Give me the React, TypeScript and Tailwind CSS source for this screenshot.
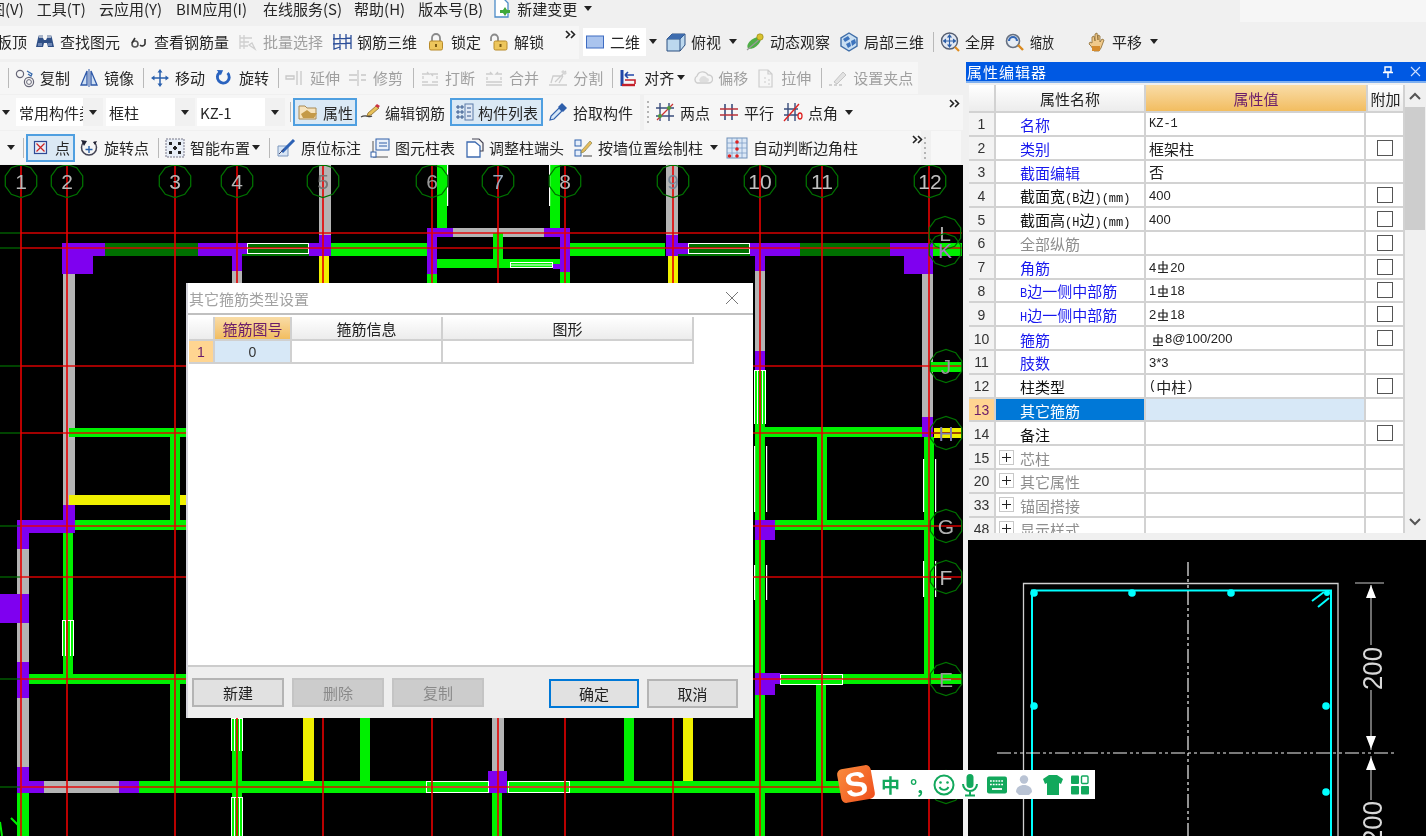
import React from "react";

const S = ({ children, w = 20, h = 20, vb = "0 0 20 20" }: { children: React.ReactNode; w?: number; h?: number; vb?: string }) => (
  <svg width={w} height={h} viewBox={vb} fill="none" className="shrink-0">{children}</svg>
);

const I = {
  binoculars: <S><path d="M3 6l1-3h4v3l1 2h2l1-2V3h4l1 3 2 9h-6l-1-4H9l-1 4H1z" fill="#2f4f86" /><path d="M4 3h4v3H4zM12 3h4v3h-4z" fill="#a8b4c8" /><path d="M3 11h4v3H3zM13 11h4v3h-4z" fill="#6d86b4" /></S>,
  glasses: <S><circle cx="6" cy="12" r="3" stroke="#555" strokeWidth="1.6" /><path d="M3 11l3-5M16 7v5a3 3 0 0 1-5 1" stroke="#333" strokeWidth="1.6" /></S>,
  batch: <S><path d="M2 3v14M6 3v14M2 6h12M2 10h9M2 14h8M11 13l6 4-3-6z" stroke="#cfcfcf" strokeWidth="1.3" /></S>,
  rebar3d: <S><path d="M2 2v15l6-2M8 2v16M14 2v15M19 3v14M1 7l18-1M1 12l18-1" stroke="#2d4f9a" strokeWidth="1.3" /></S>,
  lock: <S><path d="M6 9V6a4 4 0 0 1 8 0v3" stroke="#8a8a8a" strokeWidth="1.8" /><rect x="3.5" y="9" width="13" height="9" rx="1.5" fill="#edc65c" stroke="#b88a28" /><rect x="9" y="12" width="2" height="3" fill="#7b5a12" /></S>,
  unlock: <S><path d="M2 9V6a3.5 3.5 0 0 1 7 0v3" stroke="#8a8a8a" strokeWidth="1.8" /><rect x="5" y="9" width="13" height="9" rx="1.5" fill="#edc65c" stroke="#b88a28" /><rect x="10.5" y="12" width="2" height="3" fill="#7b5a12" /></S>,
  flat: <S w={20}><rect x="1.5" y="4" width="17" height="12" fill="#aac4ee" stroke="#3e6cc2" /></S>,
  cube: <S><path d="M1 7l5-5h13v11l-5 6H1z" fill="#bcd8ee" stroke="#2b4f80" /><path d="M1 7h13v12M14 7l5-5" stroke="#2b4f80" /><path d="M1 7l5-5h13l-5 5z" fill="#3e6cae" /></S>,
  orbit: <S><ellipse cx="9" cy="11" rx="8" ry="4" transform="rotate(-38 9 11)" fill="#4fae48" /><path d="M2 18L17 5" stroke="#999" strokeWidth="1.2" /><circle cx="15" cy="5" r="3.2" fill="#d9c22e" stroke="#8a7a10" strokeWidth=".6" /></S>,
  local3d: <S><path d="M10 1l8 5v8l-8 5-8-5V6z" fill="#c9dff2" stroke="#3f6ea8" strokeWidth="1.4" /><path d="M4 7l5-3 2 3-5 3zM12 9l4-2 1 4-4 3zM7 12l4-2 1 4-3 2z" fill="#3d74bd" /></S>,
  full: <S><circle cx="9.5" cy="9" r="8" fill="#e2e8f2" stroke="#555e70" strokeWidth="1.4" /><path d="M9.5 3.5v11M4 9h11M9.5 3L8 5h3zM9.5 15L8 13h3zM3.5 9l2-1.5v3zM15.5 9l-2-1.5v3z" stroke="#2d5fa8" strokeWidth="1.1" /><path d="M15 15l4 4" stroke="#e08c1e" strokeWidth="2.2" /></S>,
  zoom: <S><circle cx="8" cy="9" r="6.5" fill="#e6ecf4" stroke="#667080" strokeWidth="1.6" /><path d="M4 9a4 4 0 0 1 8 0" stroke="#3468b6" strokeWidth="2.2" /><path d="M13 13l5 5" stroke="#d9891e" strokeWidth="2.4" /></S>,
  pan: <S><path d="M5 11V5l2-1 1 5V2l2-1 1 7V3l2 1v6l2-3 2 1-3 8-2 3H7l-3-5-2-2 1-2z" fill="#f0c98a" stroke="#8a6a30" strokeWidth=".8" /><path d="M5 14h8v5H5z" fill="#d58b2c" /></S>,
  copy: <S><circle cx="5" cy="6" r="3.6" stroke="#667" strokeWidth="1.2" /><circle cx="14" cy="14" r="4.6" stroke="#667" strokeWidth="1.2" /><circle cx="14" cy="14" r="2.4" stroke="#667" strokeWidth="1" /><path d="M12 3l5 3-1 2-3-2" stroke="#36a" strokeWidth="1.2" /></S>,
  mirror: <S><path d="M8 3L2 17h6zM12 3l6 14h-6z" fill="#cfe0f4" stroke="#2e58a8" strokeWidth="1.3" /><path d="M10 1v18" stroke="#2e58a8" /></S>,
  move: <S><path d="M10 3v14M3 10h14" stroke="#2a60ad" strokeWidth="1.5" /><path d="M10 1L7.5 4.5h5zM10 19l-2.5-3.5h5zM1 10l3.5-2.5v5zM19 10l-3.5-2.5v5z" fill="#2a60ad" /></S>,
  rotate: <S w={18} h={18}><path d="M14 4.5A6.6 6.6 0 1 1 5 4" stroke="#2a63bf" strokeWidth="3.2" /><path d="M2 1l7 .5-2.5 5.5z" fill="#2a63bf" /></S>,
  extend: <S><path d="M1 8h8v3H1zM12 3v14M16 3v14" stroke="#c8c8c8" strokeWidth="1.3" /></S>,
  trim: <S><path d="M1 7h8M1 12h8M10 2v16M13 7h5M13 12h5" stroke="#c8c8c8" strokeWidth="1.3" /></S>,
  breakI: <S><path d="M2 14h6M12 14h6M2 17h16M3 11V8M17 11V8M2 6h7l-2-2M18 6h-7l2 2" stroke="#cdcdcd" strokeWidth="1.3" /></S>,
  merge: <S><path d="M2 14h16M2 17h16M3 12V9M17 12V9M2 6h6l-2-2M18 6h-6l2-2" stroke="#cdcdcd" strokeWidth="1.3" /></S>,
  split: <S><path d="M1 17h18M3 15l2-7h10M15 8l-4 7M7 14L18 3" stroke="#cdcdcd" strokeWidth="1.3" /><path d="M15 2l4 3-2 2-4-3z" fill="#d6d6d6" /></S>,
  align: <S><path d="M3 2v16" stroke="#2246a8" strokeWidth="3" /><path d="M3 17h13" stroke="#c41f2a" strokeWidth="2.4" /><path d="M6 12h10v4" stroke="#c41f2a" strokeWidth="1.6" /><path d="M6 7h9M6 7l3-3M6 7l3 3" stroke="#2246a8" strokeWidth="1.6" /></S>,
  offset: <S><path d="M4 15a4 4 0 0 1 0-7 6 6 0 0 1 11-1 4 4 0 0 1 1 8z" stroke="#cdcdcd" strokeWidth="1.4" /><path d="M7 14a3 3 0 0 1 0-4 4 4 0 0 1 7 0 2 2 0 0 1 0 4z" fill="#dedede" /></S>,
  stretch: <S><path d="M3 2h9l4 4v13H3zM12 2v4h4" stroke="#cdcdcd" strokeWidth="1.2" /><path d="M9 9v8M13 11v6" stroke="#ccc" strokeDasharray="2 2" /></S>,
  grip: <S><path d="M1 17h3M6 17h3M11 17h3" stroke="#c5c5c5" strokeWidth="1.4" /><path d="M6 14l9-10 3 3-9 9z" fill="#e2e2e2" stroke="#c5c5c5" /></S>,
  prop: <S><path d="M1 4h6l2 2h9v11H1z" fill="#f6e3bd" stroke="#a88a55" /><path d="M3 12l6-4 4 3h6l-3 5H5z" fill="#c49a48" /></S>,
  edit: <S><path d="M1 15c5-3 8 1 11-1" stroke="#444" strokeWidth="1.3" /><path d="M8 11l8-7 3 2-8 7-4 1z" fill="#e8c15a" stroke="#8a6a2a" strokeWidth=".8" /><path d="M15 4l2-2 3 2-2 2z" fill="#c34" /></S>,
  list: <S><rect x="10" y="2" width="8" height="16" fill="#dfe8f5" stroke="#5a7aa8" /><path d="M2 4h2v2H2zM6 4h2v2H6zM2 9h2v2H2zM6 9h2v2H6zM2 14h2v2H2zM6 14h2v2H6zM12 6h4M12 10h4M12 14h4" stroke="#35578c" strokeWidth="1" /></S>,
  dropper: <S><path d="M2 18l1-4 8-8 3 3-8 8z" fill="#d4e6f8" stroke="#3162ad" strokeWidth="1.2" /><path d="M10 5l4-4 5 5-4 4z" fill="#2e5fab" /></S>,
  twoPt: <S><path d="M5 1v18M14 1v18M1 6h18M1 14h18" stroke="#3a4d7c" strokeWidth="1.4" /><path d="M2 18L18 2" stroke="#c33" strokeWidth="1.2" /><circle cx="5" cy="14" r="2" fill="#4c9a3a" /><circle cx="14" cy="6" r="2" fill="#4c9a3a" /></S>,
  parallel: <S><path d="M6 2v16M13 2v16" stroke="#3a4d7c" strokeWidth="1.6" /><path d="M1 7h18M1 13h18" stroke="#b9323a" strokeWidth="1.6" /></S>,
  angle: <S><path d="M5 1v18M12 1v18M1 7h14M1 13h14" stroke="#3a4d7c" strokeWidth="1.4" /><path d="M1 19L16 2" stroke="#d22" strokeWidth="1.4" /><ellipse cx="17" cy="14" rx="2" ry="3" stroke="#d22" strokeWidth="1.3" /></S>,
  point: <S w={16} h={16} vb="0 0 16 16"><rect x="1.5" y="1.5" width="12" height="12" fill="#e6edf8" stroke="#2e4a96" strokeWidth="1.2" /><path d="M3.5 3.5l8 8M11.5 3.5l-8 8" stroke="#c22" strokeWidth="1.2" /></S>,
  rotPt: <S><path d="M5 4a7.5 7.5 0 1 0 10 0" stroke="#445" strokeWidth="1.5" /><path d="M10 8v7M6.5 11.5h7" stroke="#2a5fa8" strokeWidth="1.4" /><path d="M2 2l6 1-3 5zM18 3l-4 1 2 3z" fill="#223" /></S>,
  smart: <S><rect x="1" y="1" width="18" height="18" fill="#e8eef6" stroke="#778" strokeDasharray="2 1" /><path d="M4 4h3v3H4zM13 4h3v3h-3zM4 13h3v3H4zM13 13h3v3h-3z" fill="#222" /><path d="M9 8h2v4H9zM8 9h4v2H8z" fill="#222" /></S>,
  mark: <S><path d="M2 8h10v10H2z" fill="#d9e6f5" stroke="#7d97bd" /><path d="M6 14L18 2" stroke="#2d62b5" strokeWidth="3" /><path d="M3 16l5-5" stroke="#446" /></S>,
  table: <S><rect x="6" y="1" width="13" height="11" fill="#eaf1fa" stroke="#2f5fa8" /><path d="M9 5h8M9 8h8" stroke="#2f5fa8" /><path d="M3 3v16h15" stroke="#555" /><rect x="1" y="14" width="5" height="5" fill="#fff" stroke="#2f5fa8" /></S>,
  colEnd: <S><path d="M3 4h8l5 4v11H3z" fill="#fff" stroke="#3d6ab0" strokeWidth="1.3" /><path d="M8 1h7l4 4v8h-3" stroke="#445" strokeWidth="1.2" /></S>,
  wall: <S><rect x="2" y="2" width="6" height="6" fill="#e5eefa" stroke="#3162ad" /><rect x="2" y="12" width="6" height="6" fill="#e5eefa" stroke="#3162ad" /><path d="M10 18h9M10 12h3" stroke="#444" /><path d="M9 12L17 3l2 2-8 9-3 1z" fill="#e8bc5a" stroke="#885" strokeWidth=".7" /></S>,
  auto: <S w={22} h={22} vb="0 0 22 22"><rect x="1" y="1" width="20" height="20" fill="#dce8f6" stroke="#6f8fb8" /><path d="M6 1v20M11 1v20M16 1v20M1 6h20M1 11h20M1 16h20" stroke="#7fa0c8" strokeWidth=".8" /><circle cx="11" cy="5" r="1.8" fill="#d22" /><circle cx="3.5" cy="19" r="1.8" fill="#d22" /><circle cx="11" cy="19" r="1.8" fill="#d22" /><circle cx="11" cy="12" r="1.8" fill="#d22" /></S>,
  fileNew: <S><path d="M3 1h9l4 4v14H3z" fill="#fff" stroke="#4c8cc8" strokeWidth="1.3" /><path d="M13 9l2 3h3v3h-3l-2 3-2-3H8v-3h3z" fill="#3fa83a" /></S>,
};

function Caret({ className = "" }: { className?: string }) {
  return <svg width="8" height="5" viewBox="0 0 8 5" className={`shrink-0 ${className}`}><path d="M0 0h8L4 5z" fill="#222" /></svg>;
}
function Sep({ className = "" }: { className?: string }) {
  return <div className={`w-px h-5 bg-[#b9b9b9] shrink-0 ${className}`} />;
}
function More({ className = "" }: { className?: string }) {
  return <svg width="11" height="9" viewBox="0 0 11 9" className={`shrink-0 self-start mt-[4px] ${className}`}><path d="M1 1l3.5 3.5L1 8M6 1l3.5 3.5L6 8" stroke="#222" strokeWidth="1.6" fill="none" /></svg>;
}
function Dots({ className = "" }: { className?: string }) {
  return <div className={`flex flex-col gap-[3px] shrink-0 ${className}`}>{[0, 1, 2, 3, 4].map((i) => <div key={i} className="w-[2px] h-[2px] bg-[#b4b4b4]" />)}</div>;
}
function Tool({ icon, label, className = "", off = false }: { icon: React.ReactNode; label: string; className?: string; off?: boolean }) {
  return (
    <div className={`flex items-center gap-[5px] shrink-0 ${className}`}>
      <span className="w-5 h-5 flex items-center justify-center">{icon}</span>
      <span className={off ? "text-[#a0a0a0]" : "text-[#262626]"}>{label}</span>
    </div>
  );
}

function Combo({ label, className = "", wide }: { label: string; className?: string; wide: string }) {
  return (
    <div className={`flex h-[28px] shrink-0 ${className}`}>
      <div className={`bg-white overflow-hidden whitespace-nowrap flex items-center pl-[3px] ${wide}`}>{label}</div>
      <div className="w-[20px] bg-[#f1f1f1] flex items-center justify-center"><Caret /></div>
    </div>
  );
}

const G = "#00f000", P = "#7f00f0", Y = "#f0f000", W = "#b4b4b4", D = "#007000", RED = "#e60000";
type R = [number, number, number, number, string];
const walls: R[] = [
  [62, 243, 105, 256, P], [62, 243, 93, 274, P], [105, 243, 198, 256, D], [198, 243, 247, 256, P], [232, 256, 242, 271, P], [232, 271, 242, 283, W],
  [242, 254, 319, 256, D], [309, 243, 331, 256, P], [319, 235, 331, 243, P], [319, 165, 331, 235, W], [319, 256, 329, 283, Y], [331, 243, 427, 256, G],
  [437, 165, 447, 228, G], [550, 165, 560, 228, G], [453, 228, 544, 237, W], [493, 233, 503, 259, G], [437, 259, 560, 268, G], [427, 228, 453, 237, P], [427, 228, 437, 274, P],
  [544, 228, 570, 237, P], [560, 237, 570, 272, P], [553, 264, 560, 269, P], [427, 274, 437, 283, G], [560, 272, 570, 283, G], [570, 243, 665, 256, G],
  [666, 165, 678, 235, W], [666, 235, 678, 256, P], [678, 243, 688, 256, P], [668, 256, 678, 283, Y], [678, 254, 755, 256, D], [750, 243, 800, 256, P],
  [755, 256, 765, 271, P], [755, 271, 765, 351, W], [755, 370, 765, 427, G], [755, 351, 765, 370, P], [800, 243, 890, 256, D], [890, 243, 933, 256, P], [904, 243, 933, 274, P],
  [922, 274, 933, 417, W], [922, 417, 933, 437, P], [933, 243, 962, 256, G], [930, 362, 962, 372, G], [934, 428, 962, 438, Y], [934, 432, 962, 434, G],
  [755, 427, 922, 437, G], [817, 437, 827, 520, G], [765, 520, 924, 530, G], [924, 437, 934, 674, G], [755, 437, 765, 836, G], [755, 520, 775, 540, P],
  [843, 674, 962, 684, G], [816, 684, 826, 781, G], [755, 673, 780, 684, P], [755, 684, 775, 695, P], [139, 781, 900, 793, G],
  [63, 274, 75, 505, W], [63, 505, 75, 533, P], [17, 520, 75, 533, P], [17, 533, 29, 549, P], [17, 549, 29, 594, W], [0, 594, 29, 623, P], [17, 623, 29, 662, W], [17, 662, 29, 698, P],
  [17, 698, 29, 767, W], [17, 767, 29, 793, P], [29, 781, 44, 793, P], [44, 781, 119, 793, W], [119, 781, 139, 793, P], [17, 793, 29, 836, G],
  [69, 428, 186, 437, G], [69, 495, 186, 505, Y], [75, 520, 186, 530, G], [170, 437, 180, 520, G], [63, 533, 73, 674, G], [29, 674, 186, 684, G], [170, 684, 180, 781, G],
  [232, 751, 242, 781, G], [232, 793, 242, 797, G], [303, 718, 314, 781, Y], [360, 718, 370, 781, G], [492, 718, 504, 771, W], [488, 771, 507, 793, P], [492, 793, 502, 836, G], [624, 718, 634, 781, G], [683, 718, 693, 781, Y],
];
const boxesH: [number, number, number, number, string][] = [
  [247, 243, 309, 254, D], [688, 243, 750, 254, D], [510, 262, 553, 268, G], [780, 674, 843, 685, G], [426, 781, 489, 793, G], [508, 781, 570, 793, G],
];
const boxesV: [number, number, number, number][] = [[62, 620, 74, 656], [231, 718, 243, 751], [231, 797, 243, 836], [754, 370, 766, 424]];
const whiteV: [number, number, number][] = [[447, 165, 206], [549, 165, 206], [754, 446, 512], [766, 446, 512], [754, 565, 600], [766, 565, 600], [923, 459, 512], [935, 459, 512], [923, 561, 597], [935, 561, 597]];
const vx = [21, 67, 175, 237, 323, 432, 498, 565, 673, 760, 822, 929];
const hy = [233, 248, 366, 433, 526, 577, 679, 787];
const topLabels = ["1", "2", "3", "4", "5", "6", "7", "8", "9", "10", "11", "12"];
const topFill = ["#b8b8b8", "#b8b8b8", "#b8b8b8", "#b8b8b8", "#777", "#999", "#9ab", "#b8b8b8", "#789", "#c0c0c0", "#c0c0c0", "#c0c0c0"];
const topX = [21, 67, 175, 237, 323, 432, 498, 565, 673, 760, 822, 930];
const sideLabels: [string, number, number, string][] = [["L", 945, 233, "#aaa"], ["K", 945, 250, "#a878c8"], ["J", 946, 366, "#999"], ["H", 946, 433, "#7c7cb4"], ["G", 946, 526, "#b0b0b0"], ["F", 946, 577, "#b8b8b8"], ["E", 946, 679, "#999"], ["D", 946, 787, "#999"]];

function deca(cx: number, cy: number, r: number) {
  return Array.from({ length: 10 }, (_, i) => {
    const a = (Math.PI * 2 * i) / 10 + Math.PI / 10;
    return `${(cx + r * Math.cos(a)).toFixed(1)},${(cy + r * Math.sin(a)).toFixed(1)}`;
  }).join(" ");
}

function Canvas() {
  return (
    <svg width="963" height="671" viewBox="0 165 963 671" className="block bg-black">
      {walls.map(([a, b, c, d, f], i) => <rect key={i} x={a} y={b} width={c - a} height={d - b} fill={f} />)}
      {boxesH.map(([a, b, c, d, f], i) => {
        const h = (d - b - 3) / 2;
        return <g key={i}><rect x={a} y={b} width={c - a} height={d - b} fill="#fff" /><rect x={a + 1} y={b + 1} width={c - a - 2} height={h} fill={f} /><rect x={a + 1} y={d - 1 - h} width={c - a - 2} height={h} fill={f} /></g>;
      })}
      {boxesV.map(([a, b, c, d], i) => <g key={i}><rect x={a} y={b} width={c - a} height={d - b} fill="#fff" /><rect x={a + 1} y={b + 1} width={c - a - 2} height={d - b - 1} fill={G} /><rect x={(a + c) / 2 - 3} y={b + 1} width="1" height={d - b - 1} fill="#fff" /><rect x={(a + c) / 2 + 2} y={b + 1} width="1" height={d - b - 1} fill="#fff" /></g>)}
      {whiteV.map(([x, a, b], i) => <rect key={i} x={x} y={a} width="1.2" height={b - a} fill="#fff" />)}
      <path d="M0 822l2 14M11 818l8 8v10" stroke={G} strokeWidth="2" fill="none" />
      {hy.map((y) => <g key={y}><rect x="0" y={y - 0.6} width="21" height="1.2" fill={D} /><rect x="21" y={y - 0.7} width="941" height="1.4" fill={RED} /></g>)}
      {vx.map((x) => <rect key={x} x={x - 0.8} y="165" width="1.6" height="671" fill={RED} />)}
      {topX.map((x, i) => <g key={x}><polygon points={deca(x, 181, 16.5)} fill="none" stroke="#007000" strokeWidth="1.3" /><text x={x} y="188.5" textAnchor="middle" fontSize="21" fill={topFill[i]} fontFamily="'Liberation Sans',sans-serif">{topLabels[i]}</text></g>)}
      {sideLabels.map(([l, x, y, f]) => <g key={l}><polygon points={deca(x, y, 16.5)} fill="none" stroke="#007000" strokeWidth="1.3" /><text x={x} y={y + 7.5} textAnchor="middle" fontSize="21" fill={f} fontFamily="'Liberation Sans',sans-serif">{l}</text></g>)}
    </svg>
  );
}

function Rebar() {
  return <svg width="12" height="14" viewBox="0 0 12 14" className="inline-block align-[-2px] mx-[1px]"><path d="M6 1v12M2 5h8v4H2zM1 12.5h10" stroke="#222" strokeWidth="1.2" fill="none" /></svg>;
}
const M = ({ children }: { children: React.ReactNode }) => <span className="font-['Liberation_Mono',monospace] text-[12px]">{children}</span>;
const N = ({ children }: { children: React.ReactNode }) => <span className="font-['Liberation_Sans',sans-serif] text-[13px]">{children}</span>;

type Row = { n: string; name: React.ReactNode; val?: React.ReactNode; check?: boolean; cls?: string; plus?: boolean; active?: boolean };
const BLUE = "text-[#1818ee]", GRAY = "text-[#8e8e8e]", BLK = "text-[#111]";
const rows: Row[] = [
  { n: "1", name: "名称", cls: BLUE, val: <M>KZ-1</M> },
  { n: "2", name: "类别", cls: BLUE, val: "框架柱", check: true },
  { n: "3", name: "截面编辑", cls: BLUE, val: "否" },
  { n: "4", name: <>截面宽<M>(B</M>边<M>)(mm)</M></>, cls: BLK, val: <N>400</N>, check: true },
  { n: "5", name: <>截面高<M>(H</M>边<M>)(mm)</M></>, cls: BLK, val: <N>400</N>, check: true },
  { n: "6", name: "全部纵筋", cls: GRAY, check: true },
  { n: "7", name: "角筋", cls: BLUE, val: <><N>4</N><Rebar /><N>20</N></>, check: true },
  { n: "8", name: <><M>B</M>边一侧中部筋</>, cls: BLUE, val: <><N>1</N><Rebar /><N>18</N></>, check: true },
  { n: "9", name: <><M>H</M>边一侧中部筋</>, cls: BLUE, val: <><N>2</N><Rebar /><N>18</N></>, check: true },
  { n: "10", name: "箍筋", cls: BLUE, val: <><span className="ml-[2px]"><Rebar /></span><N>8@100/200</N></>, check: true },
  { n: "11", name: "肢数", cls: BLUE, val: <N>3*3</N> },
  { n: "12", name: "柱类型", cls: BLK, val: <><M>(</M>中柱<M>)</M></>, check: true },
  { n: "13", name: "其它箍筋", cls: "text-white", active: true },
  { n: "14", name: "备注", cls: BLK, check: true },
  { n: "15", name: "芯柱", cls: GRAY, plus: true },
  { n: "20", name: "其它属性", cls: GRAY, plus: true },
  { n: "33", name: "锚固搭接", cls: GRAY, plus: true },
  { n: "48", name: "显示样式", cls: GRAY, plus: true },
];

function PropGrid() {
  return (
    <div className="flex h-[450px] overflow-hidden pt-[2px]">
      <div className="w-[436px] shrink-0 overflow-hidden">
        <div className="grid grid-cols-[27px_150px_220px_39px] h-[28px] text-[15px] text-[#222]">
          <div className="border-r-2 border-b-2 border-[#d2d2d2] bg-gradient-to-b from-white to-[#ececec]" />
          <div className="border-r-2 border-b-2 border-[#d2d2d2] bg-gradient-to-b from-white to-[#ececec] flex items-center justify-center">属性名称</div>
          <div className="border-b-2 border-[#d2d2d2] bg-gradient-to-b from-[#f9dca6] to-[#f2bd5f] text-[#6a1c6a] flex items-center justify-center">属性值</div>
          <div className="border-x-2 border-b-2 border-[#d2d2d2] bg-gradient-to-b from-white to-[#ececec] flex items-center justify-center">附加</div>
        </div>
        {rows.map((r) => (
          <div key={r.n} className="grid grid-cols-[27px_150px_220px_39px] h-[23.8px] text-[15px]">
            <div className={`border-r-2 border-b-2 border-[#d2d2d2] flex items-center justify-center pt-[1px] font-['Liberation_Sans',sans-serif] text-[14px] ${r.active ? "bg-[#ffd591] text-[#6a1c6a]" : "bg-[#f3f3f3] text-[#333]"}`}>{r.n}</div>
            <div className={`border-r-2 border-b-2 border-[#d2d2d2] flex items-center pt-[2px] ${r.active ? "bg-[#0078d7]" : "bg-white"} ${r.cls}`}>
              {r.plus ? <span className="w-[15px] h-[15px] ml-[3px] mr-[6px] -mt-[2px] border border-[#c8c8c8] flex items-center justify-center text-[#222] shrink-0"><svg width="9" height="9" viewBox="0 0 9 9"><path d="M4.5 0v9M0 4.5h9" stroke="#222" /></svg></span> : <span className="w-[24px] shrink-0" />}
              <span className="whitespace-nowrap">{r.name}</span>
            </div>
            <div className={`border-r-2 border-b-2 border-[#d2d2d2] flex items-center pl-[3px] pt-[1px] text-[#222] whitespace-nowrap ${r.active ? "bg-[#d7e8f7]" : "bg-white"}`}>{r.val}</div>
            <div className="border-r-2 border-b-2 border-[#d2d2d2] flex items-center justify-center bg-white">
              {r.check && <span className="w-[16px] h-[16px] border-[1.5px] border-[#555] bg-white" />}
            </div>
          </div>
        ))}
      </div>
      <div className="w-[20px] bg-[#f0f0f0] flex flex-col items-center">
        <svg width="12" height="8" viewBox="0 0 12 8" className="mt-[7px] mb-[7px]"><path d="M1 7l5-5 5 5" stroke="#555" strokeWidth="2" fill="none" /></svg>
        <div className="w-full h-[123px] bg-[#cdcdcd]" />
        <div className="flex-1" />
        <svg width="12" height="8" viewBox="0 0 12 8" className="mb-[7px]"><path d="M1 1l5 5 5-5" stroke="#555" strokeWidth="2" fill="none" /></svg>
      </div>
    </div>
  );
}

function Section() {
  const dash = "14 3 3 3 3 3";
  const dots: [number, number][] = [[1034, 593], [1132, 593], [1231, 593], [1034, 706], [1326, 706], [1326, 792]];
  return (
    <svg width="458" height="296" viewBox="968 540 458 296" className="block bg-black">
      <path d="M1023.5 836V583.5H1338V836" stroke="#d0d0d0" strokeWidth="1.3" fill="none" />
      <path d="M1032 836V590.5H1331V836" stroke="#00ffff" strokeWidth="2" fill="none" />
      {dots.map(([x, y]) => <circle key={`${x}${y}`} cx={x} cy={y} r="3.8" fill="#00ffff" />)}
      <circle cx="1327" cy="593" r="3" fill="#00ffff" />
      <path d="M1312 601l12-9M1318 607l11-9" stroke="#00ffff" strokeWidth="2" />
      <path d="M1188 562V836" stroke="#f2f2f2" strokeWidth="1.2" strokeDasharray={dash} />
      <path d="M997 753H1394" stroke="#f2f2f2" strokeWidth="1.2" strokeDasharray={dash} />
      <path d="M1355 583h29M1371 585v60M1371 690v60M1371 756v44" stroke="#c8c8c8" strokeWidth="1.1" />
      <path d="M1371 585l-5 13h10zM1371 749l-5-13h10zM1371 757l-5 13h10z" fill="#fff" />
      <text transform="translate(1382 690) rotate(-90)" fontSize="28" textLength="43" lengthAdjust="spacingAndGlyphs" fill="#d8d8d8" fontFamily="'Liberation Sans',sans-serif">200</text>
      <text transform="translate(1382 844) rotate(-90)" fontSize="28" textLength="43" lengthAdjust="spacingAndGlyphs" fill="#d8d8d8" fontFamily="'Liberation Sans',sans-serif">200</text>
    </svg>
  );
}

function ImeBar() {
  const c = "#12a85c";
  return (
    <div className="absolute left-[839px] top-[767px] flex items-center">
      <div className="w-[34px] h-[34px] rounded-[5px] rotate-[-10deg] bg-gradient-to-br from-[#f98a3c] to-[#ef4e1c] flex items-center justify-center relative z-10">
        <span className="text-white font-black text-[34px] leading-none font-['Liberation_Sans',sans-serif]">S</span>
      </div>
      <div className="-ml-[3px] mt-[1px] w-[225px] h-[29px] bg-white flex items-center pl-[11px]">
        <span className="text-[19px] font-bold leading-none w-[26px] text-[#12a85c]">中</span>
        <span className="text-[18px] font-bold leading-none w-[26px] pl-[3px] text-[#12a85c]">°,</span>
        <svg width="22" height="22" viewBox="0 0 22 22" className="mr-[5px]"><circle cx="11" cy="11" r="9.5" stroke={c} strokeWidth="2" fill="none" /><circle cx="7.5" cy="8.5" r="1.3" fill={c} /><circle cx="14.5" cy="8.5" r="1.3" fill={c} /><path d="M6.5 13a5 5 0 0 0 9 0" stroke={c} strokeWidth="1.8" fill="none" /></svg>
        <svg width="20" height="24" viewBox="0 0 20 24" className="mr-[6px]"><rect x="6.5" y="1" width="7" height="14" rx="3.5" fill={c} /><path d="M3 11a7 7 0 0 0 14 0M10 18v4M5 22.5h10" stroke={c} strokeWidth="2" fill="none" /></svg>
        <svg width="22" height="20" viewBox="0 0 22 20" className="mr-[7px]"><rect x="1" y="1.5" width="20" height="17" rx="2" fill={c} /><path d="M4 6h14M4 9.5h14" stroke="#fff" strokeWidth="1.6" strokeDasharray="1.8 1" /><path d="M6 14h10" stroke="#fff" strokeWidth="1.8" /></svg>
        <svg width="18" height="22" viewBox="0 0 18 22" className="mr-[10px]"><circle cx="9" cy="5.5" r="4.2" fill="#b9c3d4" /><path d="M1 18c0-5 4-7 8-7s8 2 8 7l-3 3H4z" fill="#b9c3d4" /></svg>
        <svg width="20" height="22" viewBox="0 0 20 22" className="mr-[8px]"><path d="M6 1h8l6 4-2 5-2-1v12H4V9l-2 1-2-5z" fill={c} /></svg>
        <svg width="18" height="20" viewBox="0 0 18 20"><rect x="0" y="0.5" width="8" height="8.5" rx="1" fill={c} /><rect x="10.5" y="1" width="6.5" height="7.5" rx="1" fill="none" stroke={c} strokeWidth="1.4" /><rect x="0" y="11" width="8" height="8.5" rx="1" fill={c} /><rect x="10" y="11" width="8" height="8.5" rx="1" fill={c} /></svg>
      </div>
    </div>
  );
}

function Dialog() {
  const base = "h-[29px] flex items-center justify-center border-2 shrink-0 text-[15px]";
  return (
    <div className="absolute left-[186px] top-[283px] w-[567px] h-[435px] bg-white flex flex-col border-l-2 border-[#d4d4dc]">
      <div className="h-[32px] shrink-0 flex items-center justify-between pl-[1px] pr-[14px] border-b-2 border-[#c0c0c0]">
        <span className="text-[15px] text-[#a2a2a2]">其它箍筋类型设置</span>
        <svg width="14" height="14" viewBox="0 0 14 14"><path d="M1 1l12 12M13 1L1 13" stroke="#777" strokeWidth="1" /></svg>
      </div>
      <div className="flex-1 pt-[2px] pl-[1px]">
        <div className="grid grid-cols-[26px_77px_151px_251px] h-[24px] text-[15px] w-[505px]">
          <div className="border-r-2 border-b-2 border-[#d0d0d0] bg-gradient-to-b from-white to-[#ececec]" />
          <div className="border-r-2 border-b-2 border-[#d0d0d0] bg-gradient-to-b from-[#f9dca6] to-[#f2bd5f] text-[#6a1c6a] flex items-center justify-center">箍筋图号</div>
          <div className="border-r-2 border-b-2 border-[#d0d0d0] bg-gradient-to-b from-white to-[#ececec] text-[#222] flex items-center justify-center">箍筋信息</div>
          <div className="border-r-2 border-b-2 border-[#d0d0d0] bg-gradient-to-b from-white to-[#ececec] text-[#222] flex items-center justify-center">图形</div>
        </div>
        <div className="grid grid-cols-[26px_77px_151px_251px] h-[23px] text-[14px] w-[505px]">
          <div className="border-r-2 border-b-2 border-[#d0d0d0] bg-[#ffd591] text-[#6a1c6a] flex items-center justify-center font-['Liberation_Sans',sans-serif]">1</div>
          <div className="border-r-2 border-b-2 border-[#d0d0d0] bg-[#d7e8f7] text-[#333] flex items-center justify-center font-['Liberation_Sans',sans-serif]">0</div>
          <div className="border-r-2 border-b-2 border-[#d0d0d0] bg-white" />
          <div className="border-r-2 border-b-2 border-[#d0d0d0] bg-white" />
        </div>
      </div>
      <div className="h-[53px] shrink-0 bg-[#eeeeee] border-t-2 border-[#cccccc] flex items-start pt-[11px] pl-[4px]">
        <div className={`${base} w-[92px] bg-[#e1e1e1] border-[#b4b4b4] text-[#222]`}>新建</div>
        <div className={`${base} w-[92px] ml-[8px] bg-[#cccccc] border-[#c4c4c4] text-[#8a8a8a]`}>删除</div>
        <div className={`${base} w-[92px] ml-[8px] bg-[#cccccc] border-[#c4c4c4] text-[#8a8a8a]`}>复制</div>
        <div className={`${base} w-[90px] ml-[65px] mt-[1px] bg-[#e1e1e1] border-[#0078d7] text-[#222]`}>确定</div>
        <div className={`${base} w-[91px] ml-[8px] mt-[1px] bg-[#e1e1e1] border-[#b4b4b4] text-[#222]`}>取消</div>
      </div>
    </div>
  );
}

export default function App() {
  return (
    <div className="relative w-[1426px] h-[836px] overflow-hidden bg-[#f0f0f0] flex flex-col text-[15px] leading-none text-[#262626] blur-[0.35px] font-['Noto_Sans_CJK_SC',sans-serif]">
      {/* menu */}
      <div className="h-[25px] shrink-0 flex items-center whitespace-nowrap pb-[9px]">
        <span className="-ml-[10px]">图(V)</span>
        <span className="ml-[13px]">工具(T)</span>
        <span className="ml-[13px]">云应用(Y)</span>
        <span className="ml-[14px]">BIM应用(I)</span>
        <span className="ml-[16px]">在线服务(S)</span>
        <span className="ml-[12px]">帮助(H)</span>
        <span className="ml-[13px]">版本号(B)</span>
        <span className="ml-[9px]">{I.fileNew}</span>
        <span className="ml-[5px]">新建变更</span>
        <Caret className="ml-[7px]" />
        <div className="flex-1" />
        <div className="w-[186px] h-[22px] self-start bg-[#f6f6f6]" />
      </div>
      {/* toolbar 1 */}
      <div className="h-[35px] shrink-0 flex items-center whitespace-nowrap">
        <div className="w-[579px] h-[33px] bg-[#f6f6f6] flex items-center shrink-0 pb-[2px]">
          <span className="-ml-[3px]">板顶</span>
          <Tool icon={I.binoculars} label="查找图元" className="ml-[8px]" />
          <Tool icon={I.glasses} label="查看钢筋量" className="ml-[9px]" />
          <Tool icon={I.batch} label="批量选择" className="ml-[9px]" off />
          <Tool icon={I.rebar3d} label="钢筋三维" className="ml-[9px]" />
          <Tool icon={I.lock} label="锁定" className="ml-[9px]" />
          <Tool icon={I.unlock} label="解锁" className="ml-[8px]" />
          <More className="ml-[21px]" />
        </div>
        <div className="h-[33px] ml-[4px] flex items-center flex-1 pb-[2px]">
          <div className="bg-white h-[28px] w-[63px] flex items-center pl-[2px] gap-[5px] shrink-0">{I.flat}<span>二维</span></div>
          <div className="bg-[#f0f0f0] h-[26px] w-[14px] flex items-center justify-center shrink-0"><Caret /></div>
          <Tool icon={I.cube} label="俯视" className="ml-[6px]" />
          <Caret className="ml-[8px]" />
          <Tool icon={I.orbit} label="动态观察" className="ml-[8px]" />
          <Tool icon={I.local3d} label="局部三维" className="ml-[9px]" />
          <Sep className="ml-[9px]" />
          <Tool icon={I.full} label="全屏" className="ml-[6px]" />
          <div className="flex items-center gap-[5px] ml-[10px] w-[60px] shrink-0">{I.zoom}<span className="scale-x-80 origin-left">缩放</span></div>
          <Tool icon={I.pan} label="平移" className="ml-[22px]" />
          <Caret className="ml-[8px]" />
        </div>
      </div>
      <div className="flex-1 min-h-0 flex">
        <div className="w-[963px] shrink-0 flex flex-col whitespace-nowrap">
          {/* toolbar 2 */}
          <div className="h-[35px] shrink-0 flex items-center">
            <div className="w-[918px] h-[32px] bg-[#f6f6f6] flex items-center pl-[8px]">
              <Sep />
              <Tool icon={I.copy} label="复制" className="ml-[6px]" />
              <Tool icon={I.mirror} label="镜像" className="ml-[9px]" />
              <Sep className="ml-[9px]" />
              <Tool icon={I.move} label="移动" className="ml-[6px]" />
              <Tool icon={I.rotate} label="旋转" className="ml-[9px]" />
              <Sep className="ml-[9px]" />
              <Tool icon={I.extend} label="延伸" className="ml-[6px]" off />
              <Tool icon={I.trim} label="修剪" className="ml-[8px]" off />
              <Sep className="ml-[10px]" />
              <Tool icon={I.breakI} label="打断" className="ml-[6px]" off />
              <Tool icon={I.merge} label="合并" className="ml-[9px]" off />
              <Tool icon={I.split} label="分割" className="ml-[9px]" off />
              <Sep className="ml-[9px]" />
              <Tool icon={I.align} label="对齐" className="ml-[6px]" />
              <Caret className="ml-[3px]" />
              <Tool icon={I.offset} label="偏移" className="ml-[8px]" off />
              <Tool icon={I.stretch} label="拉伸" className="ml-[8px]" off />
              <Sep className="ml-[10px]" />
              <Tool icon={I.grip} label="设置夹点" className="ml-[6px]" off />
            </div>
          </div>
          {/* toolbar 3 */}
          <div className="h-[35px] shrink-0 flex items-center bg-[#f6f6f6] pb-[1px]">
            <Caret className="ml-[2px]" />
            <Combo label="常用构件类" wide="w-[67px]" className="ml-[6px]" />
            <Combo label="框柱" wide="w-[69px]" className="ml-[3px]" />
            <Combo label="KZ-1" wide="w-[68px]" className="ml-[2px]" />
            <Sep className="ml-[5px]" />
            <div className="ml-[2px] w-[64px] h-[28px] border-2 border-[#4f9fe0] bg-[#dbe9f5] flex items-center pl-[3px] gap-[5px] shrink-0">{I.prop}<span>属性</span></div>
            <Tool icon={I.edit} label="编辑钢筋" className="ml-[3px]" />
            <div className="ml-[5px] w-[93px] h-[28px] border-2 border-[#4f9fe0] bg-[#dbe9f5] flex items-center pl-[3px] gap-[3px] shrink-0">{I.list}<span>构件列表</span></div>
            <Tool icon={I.dropper} label="拾取构件" className="ml-[5px]" />
            <div className="w-[4px] h-[35px] ml-[7px] bg-[#f0f0f0] shrink-0" />
            <Dots className="ml-[3px]" />
            <Tool icon={I.twoPt} label="两点" className="ml-[6px]" />
            <Tool icon={I.parallel} label="平行" className="ml-[9px]" />
            <Tool icon={I.angle} label="点角" className="ml-[9px]" />
            <Caret className="ml-[7px]" />
            <More className="ml-[96px]" />
          </div>
          {/* toolbar 4 */}
          <div className="h-[35px] shrink-0 flex items-center">
            <div className="w-[921px] h-[33px] bg-[#f6f6f6] flex items-center shrink-0">
              <Caret className="ml-[7px]" />
              <Sep className="ml-[8px]" />
              <div className="ml-[2px] w-[49px] h-[28px] border-2 border-[#4f9fe0] bg-[#dbe9f5] flex items-center pl-[5px] shrink-0">{I.point}<span className="ml-[6px]">点</span></div>
              <Tool icon={I.rotPt} label="旋转点" className="ml-[4px]" />
              <Sep className="ml-[9px]" />
              <Tool icon={I.smart} label="智能布置" className="ml-[6px]" />
              <Caret className="ml-[2px]" />
              <Sep className="ml-[9px]" />
              <Tool icon={I.mark} label="原位标注" className="ml-[6px]" />
              <Tool icon={I.table} label="图元柱表" className="ml-[9px]" />
              <Tool icon={I.colEnd} label="调整柱端头" className="ml-[9px]" />
              <Tool icon={I.wall} label="按墙位置绘制柱" className="ml-[9px]" />
              <Caret className="ml-[7px]" />
              <div className="flex items-center gap-[5px] ml-[8px] shrink-0">{I.auto}<span>自动判断边角柱</span></div>
              <More className="ml-[54px]" />
            </div>
            <Dots className="ml-[3px]" />
            <div className="ml-[5px] w-[30px] h-[33px] bg-[#f7f7f7]" />
          </div>
          <div className="flex-1 min-h-0 overflow-hidden"><Canvas /></div>
        </div>
        {/* right panel */}
        <div className="flex-1 min-w-0 pl-[3px] flex flex-col bg-[#f0f0f0]">
          <div className="h-[19px] mt-[2px] shrink-0 bg-[#0059e3] flex items-center text-white text-[15px] tracking-[1px] pl-[1px]">
            <span>属性编辑器</span>
            <div className="flex-1" />
            <svg width="10" height="12" viewBox="0 0 10 12"><path d="M2 1h6v5H2zM0 6.5h10M5 7v5" stroke="#fff" strokeWidth="1.4" fill="none" /></svg>
            <svg width="11" height="11" viewBox="0 0 11 11" className="ml-[17px] mr-[5px]"><path d="M1 1l9 9M10 1l-9 9" stroke="#cfe0ff" strokeWidth="1.1" /></svg>
          </div>
          <div className="border-t-2 border-[#7fb0f0]" />
          <div className="pl-[3px]"><PropGrid /></div>
          <div className="h-[7px] shrink-0" />
          <div className="pl-[2px] flex-1 min-h-0 overflow-hidden"><Section /></div>
        </div>
      </div>
      <Dialog />
      <ImeBar />
    </div>
  );
}
